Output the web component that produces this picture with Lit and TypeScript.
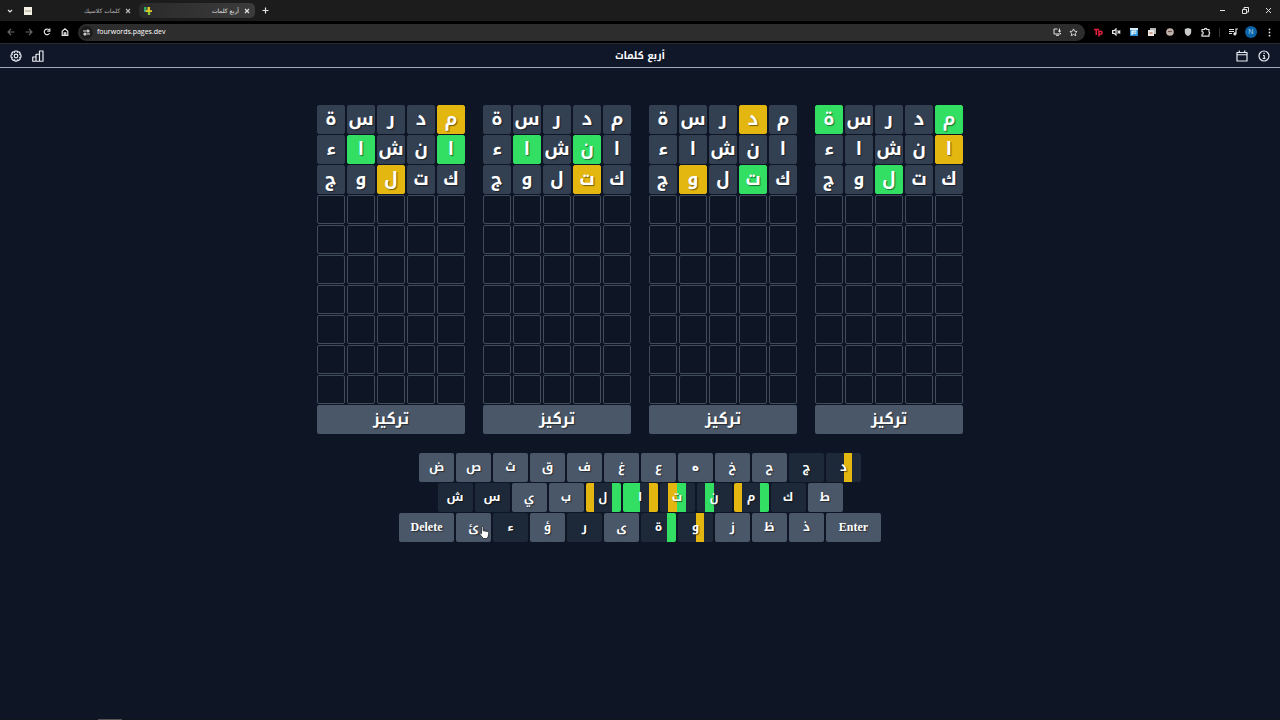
import { LitElement, html, svg, css } from "lit";
import { customElement, property } from "lit/decorators.js";

type Mark = "none" | "near" | "hit";

const GUESSES = ["مدرسة", "انشاء", "كتلوج"];
const ROWS = 10;

// One string per guess: g = right place, y = wrong place, - = absent.
const BOARDS: string[][] = [
  ["y----", "g--g-", "--y--"],
  ["-----", "-g-g-", "-y---"],
  ["-y---", "-----", "-g-y-"],
  ["g---g", "y----", "--g--"],
];

const KEY_ROWS = ["ضصثقفغعهخحجد", "شسيبلاتنمكط", "ئءؤرىةوزظذ"];

function markFor(board: string[], letter: string): Mark {
  let best: Mark = "none";
  GUESSES.forEach((word, w) =>
    [...word].forEach((ch, i) => {
      if (ch !== letter) return;
      if (board[w][i] === "g") best = "hit";
      else if (board[w][i] === "y" && best === "none") best = "near";
    })
  );
  return best;
}

@customElement("browser-bar")
class BrowserBar extends LitElement {
  static styles = css`
    :host { display: block; background: #000; color: #e3e3e3; font: 8px/12px "Open Sans", "Noto Sans", "DejaVu Sans", sans-serif; }
    .tabs { display: flex; align-items: center; height: 21px; background: #1c1c1c; }
    button { display: flex; align-items: center; justify-content: center; padding: 0; border: 0; background: none; color: inherit; font: inherit; }
    svg { display: block; fill: none; stroke: currentColor; stroke-width: 1.2; }
    .menu { width: 20px; }
    .tab { display: flex; align-items: center; box-sizing: border-box; height: 15px; padding: 0 3px 0 5px; border-radius: 5px; }
    .tab.first { width: 115px; color: #b8b8b8; padding: 0 2px 0 4px; }
    .tab.active { width: 116px; margin-left: 4px; background: linear-gradient(90deg, #2a2a2a, #3c3c3c); }
    .title { flex: 1; direction: rtl; padding-right: 3px; text-align: start; font: 6px/12px "DejaVu Sans", sans-serif; }
    .close { width: 10px; height: 12px; }
    .add { width: 20px; }
    .window { display: flex; margin-left: auto; }
    .window button { width: 23px; height: 20px; }
    .tools { display: flex; align-items: center; height: 22px; padding-right: 2px; }
    .tools > button { width: 18px; height: 18px; }
    .tools .off { color: #666; }
    .nav { display: flex; padding-left: 2px; width: 76px; box-sizing: border-box; }
    .nav button { width: 18px; height: 18px; }
    .address { flex: 1; display: flex; align-items: center; height: 17px; box-sizing: border-box; padding: 0 4px 0 2px; border-radius: 9px; background: #2d2d2d; margin: 0 4px 0 2px; }
    .site { width: 13px; height: 13px; border-radius: 50%; background: #1c1c1c; }
    .url { flex: 1; min-width: 0; margin: 0 4px; padding: 0; border: 0; background: none; color: #fff; font: 7px/12px "Open Sans", sans-serif; outline: none; }
    .address .small { width: 17px; }
    .address .small:last-child { width: 15px; }
    .ext { display: flex; }
    .ext button { width: 18px; height: 18px; }
    .sep { width: 1px; height: 9px; background: #333; margin: 0 4px; }
    .avatar { width: 12px; height: 12px; border-radius: 50%; background: #0b63a5; color: #bfe0ff; font: 7px/12px "Open Sans", sans-serif; }
  `;
  render() {
    const x = svg`<path d="M1 1l4 4M5 1l-4 4"/>`;
    return html`
      <div class="tabs">
        <button class="menu" aria-label="Search tabs"><svg width="6" height="6"><path d="M1 2l2 2 2-2"/></svg></button>
        <div class="tab first">
          <svg width="8" height="8"><path fill="#f4f1e4" stroke="none" d="M0 0h8v8H0z"/><path stroke="#a09c8c" stroke-width="1" d="M1 4h6"/></svg>
          <span class="title">كلمات كلاسيك</span>
          <button class="close" aria-label="Close tab"><svg width="6" height="6">${x}</svg></button>
        </div>
        <div class="tab active">
          <svg width="8" height="8"><g stroke="none"><path fill="#2fae62" d="M0 0h2.500v3.500H0z"/><path fill="#2b9a90" d="M0 3h4v2H0z"/><path fill="#e3c72a" d="M3.500 0H6v3.500h-2.500zM1.500 3.300H8V5H1.500z"/><path fill="#7dc43a" d="M3.800 5h2.400v3H3.800z"/></g></svg>
          <span class="title">أربع كلمات</span>
          <button class="close" aria-label="Close tab"><svg width="6" height="6">${x}</svg></button>
        </div>
        <button class="add" aria-label="New tab"><svg width="7" height="7"><path d="M3.500.500v6M.5 3.500h6"/></svg></button>
        <div class="window">
          <button aria-label="Minimize"><svg width="7" height="7"><path stroke-width="1" d="M1 3.500h5"/></svg></button>
          <button aria-label="Restore"><svg width="7" height="7"><path stroke-width="1" d="M.5 2.500h4v4h-4zM2 2V.5h4.500V5H5"/></svg></button>
          <button aria-label="Close"><svg width="7" height="7"><path stroke-width="1" d="M1 1l5 5M6 1l-5 5"/></svg></button>
        </div>
      </div>
      <div class="tools">
        <div class="nav">
          <button class="off" aria-label="Back"><svg width="8" height="8"><path d="M7.500 4H1M4 1L1 4l3 3"/></svg></button>
          <button class="off" aria-label="Forward"><svg width="8" height="8"><path d="M.5 4H7M4 1l3 3-3 3"/></svg></button>
          <button aria-label="Reload"><svg width="8" height="8"><path d="M6.500 5.200A2.800 2.800 0 1 1 6 1.800M6.800.500v2.700H4.200"/></svg></button>
          <button aria-label="Home"><svg width="8" height="8"><path d="M1.200 3.300L4 .9l2.800 2.400v4H1.200zM3.200 7V4.800h1.600V7"/></svg></button>
        </div>
        <div class="address">
          <button class="site" aria-label="Site information"><svg width="7" height="7"><path d="M0 2h3M4 5h3"/><circle cx="5" cy="2" r="1"/><circle cx="2" cy="5" r="1"/></svg></button>
          <input class="url" aria-label="Address" value="fourwords.pages.dev" />
          <button class="small" aria-label="Install"><svg width="9" height="8"><path stroke-width="1" d="M4.500 1H1v5h6.500V5M3 7.300h3M6.500.500v3.500M5 2.600L6.500 4 8 2.600"/></svg></button>
          <button class="small" aria-label="Bookmark"><svg width="9" height="9"><path stroke-width="0.900" d="M4.500.900l1.100 2.300 2.500.300-1.800 1.700.500 2.500-2.300-1.200-2.300 1.200.5-2.500L.9 3.500l2.500-.3z"/></svg></button>
        </div>
        <div class="ext">
          <button aria-label="Extension"><svg width="9" height="9"><path stroke="#e4203a" stroke-width="1.600" d="M0 1.500h5M2.300 1.500V7M5 8.500V3.200h1.500a1.300 1.300 0 0 1 0 3H5"/></svg></button>
          <button aria-label="Mute"><svg width="9" height="8"><path d="M4 1L2.200 2.700H.6v2.600h1.600L4 7zM5.500 2.500l2.800 3M8.300 2.500l-2.800 3"/></svg></button>
          <button aria-label="Extension"><svg width="8" height="8"><path fill="#d9eefb" stroke="none" d="M0 0h8v8H0z"/><path fill="#2b8fd8" stroke="none" d="M0 2h8v6H0z"/><path stroke="#fff" d="M1.500 3.200h5M2 3v4M2 5.200h4.500"/></svg></button>
          <button aria-label="Extension"><svg width="8" height="8"><path fill="#b9b9b9" stroke="none" d="M2 0h6v6H2z"/><path fill="#efe9e6" stroke="none" d="M0 2h6v6H0z"/><path stroke="#b56a55" d="M1.500 5h3"/></svg></button>
          <button aria-label="Extension"><svg width="8" height="8"><circle cx="4" cy="4" r="3.800" fill="#c3b3ad" stroke="none"/><path stroke="#6c5550" d="M2 3.500h4"/></svg></button>
          <button aria-label="Shield"><svg width="8" height="8"><path fill="#c9cbcc" stroke="none" d="M4 0l3.200 1v3C7.200 6 5.800 7.400 4 8 2.200 7.400.8 6 .8 4V1z"/></svg></button>
          <button aria-label="Extensions"><svg width="10" height="10"><path d="M1 2.500h2.500a1.200 1.200 0 0 1 2.400 0H8V5a1.200 1.200 0 0 1 0 2.200v2H1V7.300a1.300 1.300 0 0 0 0-2.600z"/></svg></button>
        </div>
        <span class="sep"></span>
        <button aria-label="Media"><svg width="9" height="8"><path d="M0 1.500h5M0 3.500h5M0 5.500h3M8.800 1H7v4.500"/><circle cx="5.900" cy="5.800" r="1" fill="currentColor"/></svg></button>
        <button aria-label="Profile"><span class="avatar">N</span></button>
        <button aria-label="Menu"><svg width="3" height="9"><g fill="currentColor" stroke="none"><circle cx="1.500" cy="1.300" r=".9"/><circle cx="1.500" cy="4.500" r=".9"/><circle cx="1.500" cy="7.700" r=".9"/></g></svg></button>
      </div>
    `;
  }
}

@customElement("word-board")
class WordBoard extends LitElement {
  @property({ attribute: false }) marks: string[] = [];
  static styles = css`
    :host { display: grid; gap: 1px; }
    .row { display: grid; grid-template-columns: repeat(5, 28px); gap: 2px; direction: rtl; }
    .cell { box-sizing: border-box; height: 29px; border-radius: 2px; border: 1px solid #414c5b; text-align: center; color: #fff; font: bold 18px/27px "Noto Kufi Arabic", "DejaVu Sans", sans-serif; text-shadow: 1px 1px 1px rgba(0, 0, 0, 0.5); }
    .miss { background: #334052; border-color: #334052; }
    .y { background: #e4b610; border-color: #e4b610; }
    .g { background: #32df62; border-color: #32df62; }
    button { height: 29px; padding: 0; border: 0; border-radius: 2px; background: #4a5768; color: #fff; font: bold 15px/29px "Noto Kufi Arabic", "DejaVu Sans", sans-serif; text-shadow: 1px 1px 1px rgba(0, 0, 0, 0.5); }
  `;
  render() {
    return html`
      ${Array.from({ length: ROWS }, (_, r) => html`<div class="row">
        ${Array.from({ length: 5 }, (_, c) => {
          const m = this.marks[r]?.[c];
          const kind = m === undefined ? "" : m === "-" ? "miss" : m;
          return html`<div class="cell ${kind}">${m === undefined ? "" : GUESSES[r][c]}</div>`;
        })}
      </div>`)}
      <button>تركيز</button>
    `;
  }
}

@customElement("key-board")
class KeyBoard extends LitElement {
  static styles = css`
    :host { display: grid; gap: 1px; justify-content: center; }
    .row { display: flex; gap: 2px; justify-content: center; }
    .key { position: relative; display: grid; grid-template-columns: repeat(4, 1fr); width: 35px; height: 29px; padding: 0; border: 0; border-radius: 2px; overflow: hidden; background: #4a5768; color: #fff; font: bold 12px/29px "Noto Kufi Arabic", "DejaVu Sans", sans-serif; text-shadow: 1px 1px 1px rgba(0, 0, 0, 0.5); }
    .used { background: #1d2938; }
    .round { font-family: "DejaVu Sans", sans-serif; }
    .stripe { height: 29px; }
    .near { background: #e4b610; }
    .hit { background: #32df62; }
    .letter { position: absolute; inset: 0; }
    .wide { display: block; width: 55px; font: bold 12px/29px "Liberation Serif", serif; }
    .pointer { position: absolute; z-index: 1; left: 23px; top: 13px; }
    .slot { position: relative; }
  `;
  private key(letter: string) {
    const used = GUESSES.some((w) => w.includes(letter));
    return html`<button class="key ${used ? "used" : ""} ${letter === "ه" ? "round" : ""}">
      ${BOARDS.map((b) => html`<span class="stripe ${markFor(b, letter)}"></span>`)}
      <span class="letter">${letter}</span>
    </button>`;
  }
  render() {
    return KEY_ROWS.map((letters, r) => html`<div class="row">
      ${r === 2 ? html`<button class="key wide">Delete</button>` : ""}
      ${[...letters].map((l) => l === "ئ"
        ? html`<div class="slot">${this.key(l)}<svg class="pointer" width="11" height="13" viewBox="0 0 11 13"><path fill="#fff" stroke="#111" stroke-width=".7" d="M2.500 1.300c0-1.100 1.600-1.100 1.600 0v3.400l4.200.8c1 .2 1.500.8 1.400 1.800l-.5 3-1.100 2.200H4.300L.9 8.300c-.6-.9.4-1.500 1.600-.5z"/></svg></div>`
        : this.key(l))}
      ${r === 2 ? html`<button class="key wide">Enter</button>` : ""}
    </div>`);
  }
}

@customElement("app-root")
class AppRoot extends LitElement {
  static styles = css`
    :host { display: flex; flex-direction: column; min-height: 100vh; background: #0e1626; color: #fff; }
    header { display: grid; grid-template-columns: 1fr auto 1fr; align-items: center; box-sizing: border-box; height: 25px; padding: 0 9px; border-top: 1px solid #26292f; border-bottom: 1px solid #a0a9bb; background: #101729; }
    h1 { margin: 0; font: bold 10px/20px "Noto Kufi Arabic", "DejaVu Sans", sans-serif; }
    .side { display: flex; gap: 8px; }
    .side.end { justify-content: flex-end; }
    .side button { display: flex; align-items: center; justify-content: center; width: 14px; height: 14px; padding: 0; border: 0; background: none; color: #e8ecf2; }
    .side svg { fill: none; stroke: currentColor; stroke-width: 2.4; stroke-linejoin: round; }
    main { flex: 1; padding-top: 37px; }
    .boards { display: flex; justify-content: center; gap: 18px; margin-bottom: 19px; }
    footer { height: 1px; background: #11161c; display: flex; padding-left: 98px; }
    .handle { width: 24px; background: #555; }
  `;
  render() {
    return html`
      <browser-bar></browser-bar>
      <header>
        <div class="side">
          <button aria-label="Settings"><svg width="12" height="12" viewBox="0 0 24 24"><path d="M9.800 2h4.400l.8 2.600 2.600-1.100 3 3-1.200 2.600 2.600.9v4.200l-2.600.9 1.200 2.600-3 3-2.600-1.200-.9 2.600H9.900L9 19.500l-2.600 1.200-3-3 1.200-2.600-2.600-.9V10l2.600-.9-1.200-2.600 3-3L9 4.600z"/><circle cx="12" cy="12" r="3.600"/></svg></button>
          <button aria-label="Statistics"><svg width="12" height="12" viewBox="0 0 24 24"><path d="M1.500 14h6.500v8.500H1.500zM8 8.500h7v14H8zM15 2h7v20.500h-7z"/></svg></button>
        </div>
        <h1 lang="ar" dir="rtl">أربع كلمات</h1>
        <div class="side end">
          <button aria-label="Daily"><svg width="12" height="12" viewBox="0 0 24 24"><path d="M2 5h20v17H2zM2 9.500h20M6.500 1v5M17.500 1v5"/></svg></button>
          <button aria-label="Help"><svg width="12" height="12" viewBox="0 0 24 24"><circle cx="12" cy="12" r="10"/><path d="M10 11h2.500v6M9.500 17h5.500M11 6.800h2.500"/></svg></button>
        </div>
      </header>
      <main>
        <div class="boards">${BOARDS.map((b) => html`<word-board .marks=${b}></word-board>`)}</div>
        <key-board></key-board>
      </main>
      <footer><span class="handle"></span></footer>
    `;
  }
}
